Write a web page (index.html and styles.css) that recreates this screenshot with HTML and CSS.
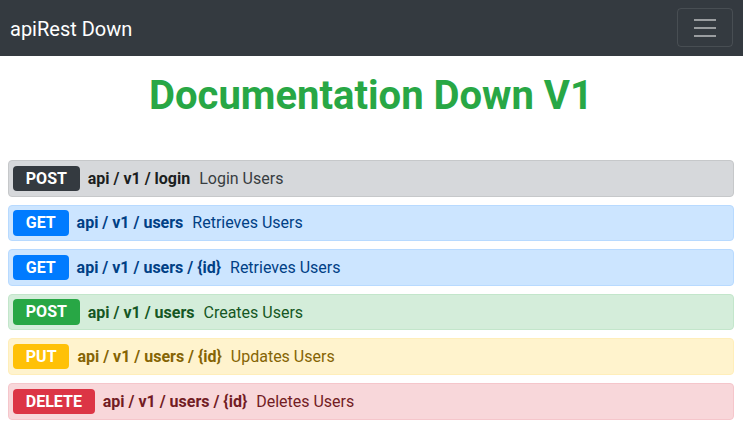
FILE: index.html
```html
<!DOCTYPE html>
<html lang="en">
<head>
<meta charset="utf-8">
<title>apiRest Down</title>
<link rel="stylesheet" href="styles.css">
</head>
<body>
<nav class="navbar">
  <span class="brand">apiRest Down</span>
  <button class="toggler" aria-label="Toggle navigation">
    <svg width="30" height="30" viewBox="0 0 30 30"><path d="M4 7h22M4 15h22M4 23h22" stroke="rgba(255,255,255,0.5)" stroke-width="2" stroke-linecap="butt"/></svg>
  </button>
</nav>
<main class="content">
  <h1 class="title">Documentation Down V1</h1>
  <div class="endpoints">
    <div class="alert secondary"><span class="badge b-dark">POST</span><span class="path">api / v1 / login</span><span class="desc">Login Users</span></div>
    <div class="alert primary"><span class="badge b-primary">GET</span><span class="path">api / v1 / users</span><span class="desc">Retrieves Users</span></div>
    <div class="alert primary"><span class="badge b-primary">GET</span><span class="path">api / v1 / users / {id}</span><span class="desc">Retrieves Users</span></div>
    <div class="alert success"><span class="badge b-success">POST</span><span class="path">api / v1 / users</span><span class="desc">Creates Users</span></div>
    <div class="alert warning"><span class="badge b-warning">PUT</span><span class="path">api / v1 / users / {id}</span><span class="desc">Updates Users</span></div>
    <div class="alert danger"><span class="badge b-danger">DELETE</span><span class="path">api / v1 / users / {id}</span><span class="desc">Deletes Users</span></div>
  </div>
</main>
</body>
</html>
```
FILE: styles.css
```css
* { box-sizing: border-box; }
html, body { margin: 0; padding: 0; }
body {
  font-family: Roboto, "Liberation Sans", sans-serif;
  font-size: 16px;
  background: #fff;
  color: #212529;
}
.navbar {
  height: 56px;
  background: #343a40;
  display: flex;
  align-items: center;
  justify-content: space-between;
  padding: 0 10px 0 10px;
}
.brand {
  color: #fff;
  font-size: 20px;
  line-height: 30px;
  padding-top: 2px;
}
.toggler {
  width: 56px;
  height: 39px;
  margin-top: -1px;
  background: transparent;
  border: 1px solid rgba(255,255,255,0.1);
  border-radius: 4px;
  padding: 0;
  display: flex;
  align-items: center;
  justify-content: center;
}
.toggler svg { display: block; width: 30px; height: 30px; }
.content { padding: 0 9px 0 8px; }
.title {
  margin: 16px 0 0;
  text-align: center;
  color: #28a745;
  font-size: 40px;
  line-height: 48px;
  font-weight: 700;
}
.endpoints { margin-top: 40px; display: flex; flex-direction: column; gap: 8px; }
.alert {
  display: flex;
  align-items: center;
  gap: 8px;
  height: 36.6px;
  padding: 0 4px;
  border: 1px solid;
  border-radius: 4px;
}
.badge {
  display: inline-block;
  height: 25.5px;
  line-height: 25.5px;
  padding: 0 12.8px;
  border-radius: 4px;
  color: #fff;
  font-weight: 700;
  font-size: 16px;
}
.path { font-weight: 700; }
.desc { margin-left: 1px; }
.secondary { background: #d6d8db; border-color: #c6c8ca; color: #1b1e21; }
.secondary .desc { color: #383d41; }
.primary { background: #cce5ff; border-color: #b8daff; color: #004085; }
.success { background: #d4edda; border-color: #c3e6cb; color: #155724; }
.warning { background: #fff3cd; border-color: #ffeeba; color: #856404; }
.danger { background: #f8d7da; border-color: #f5c6cb; color: #721c24; }
.b-dark { background: #343a40; }
.b-primary { background: #007bff; }
.b-success { background: #28a745; }
.b-warning { background: #ffc107; }
.b-danger { background: #dc3545; }
```
